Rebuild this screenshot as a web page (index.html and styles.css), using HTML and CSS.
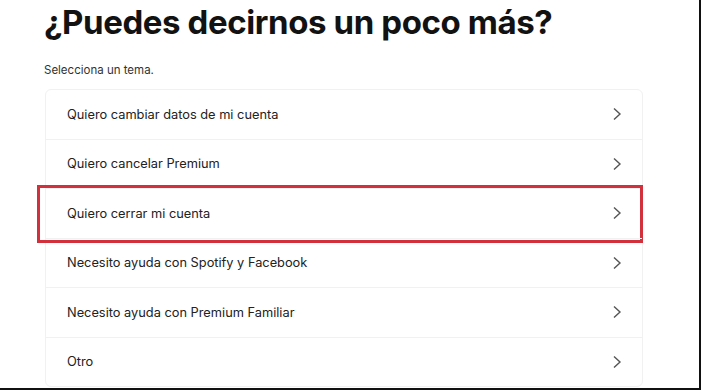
FILE: index.html
```html
<!DOCTYPE html>
<html lang="es">
<head>
<meta charset="utf-8">
<title>¿Puedes decirnos un poco más?</title>
<link rel="stylesheet" href="styles.css">
</head>
<body>
<div class="page">
  <div class="content">
    <h1 class="title">¿Puedes decirnos un poco más?</h1>
    <p class="subtitle">Selecciona un tema.</p>
    <ul class="topics">
      <li class="topic"><span>Quiero cambiar datos de mi cuenta</span><svg class="chev" viewBox="0 0 10 14" width="10" height="14"><path d="M2 1.5 L8 7 L2 12.5" fill="none" stroke="#555" stroke-width="1.4"/></svg></li>
      <li class="topic"><span>Quiero cancelar Premium</span><svg class="chev" viewBox="0 0 10 14" width="10" height="14"><path d="M2 1.5 L8 7 L2 12.5" fill="none" stroke="#555" stroke-width="1.4"/></svg></li>
      <li class="topic highlighted"><span>Quiero cerrar mi cuenta</span><svg class="chev" viewBox="0 0 10 14" width="10" height="14"><path d="M2 1.5 L8 7 L2 12.5" fill="none" stroke="#555" stroke-width="1.4"/></svg></li>
      <li class="topic"><span>Necesito ayuda con Spotify y Facebook</span><svg class="chev" viewBox="0 0 10 14" width="10" height="14"><path d="M2 1.5 L8 7 L2 12.5" fill="none" stroke="#555" stroke-width="1.4"/></svg></li>
      <li class="topic"><span>Necesito ayuda con Premium Familiar</span><svg class="chev" viewBox="0 0 10 14" width="10" height="14"><path d="M2 1.5 L8 7 L2 12.5" fill="none" stroke="#555" stroke-width="1.4"/></svg></li>
      <li class="topic"><span>Otro</span><svg class="chev" viewBox="0 0 10 14" width="10" height="14"><path d="M2 1.5 L8 7 L2 12.5" fill="none" stroke="#555" stroke-width="1.4"/></svg></li>
    </ul>
  </div>
</div>
</body>
</html>
```
FILE: styles.css
```css
html, body {
  margin: 0;
  padding: 0;
  background: #fff;
}
.page {
  width: 699px;
  height: 388px;
  border-right: 2px solid #111;
  border-bottom: 2px solid #111;
  overflow: hidden;
  background: #fff;
  font-family: Inter, "Liberation Sans", sans-serif;
  color: #222;
}
.content {
  padding-left: 44px;
  width: 599px;
}
.title {
  margin: 0;
  padding-top: 2px;
  font-size: 33px;
  line-height: 40px;
  font-weight: 700;
  color: #121212;
  letter-spacing: -0.4px;
}
.subtitle {
  margin: 21px 0 0 0;
  font-size: 11.5px;
  line-height: 14px;
  color: #333;
}
.topics {
  list-style: none;
  margin: 12px 0 0 1px;
  padding: 0;
  border: 1px solid #f1f1f1;
  border-radius: 6px;
}
.topic {
  position: relative;
  display: flex;
  align-items: center;
  justify-content: space-between;
  height: 48.5px;
  padding: 0 20px 0 21px;
  border-top: 1px solid #f1f1f1;
  font-size: 12.8px;
  color: #222;
}
.topic:first-child {
  border-top: none;
}
.chev {
  display: block;
}
.highlighted::after {
  content: "";
  position: absolute;
  left: -9px;
  right: -1px;
  top: -4px;
  bottom: -5px;
  border: 3px solid #d2313c;
  pointer-events: none;
}
```
